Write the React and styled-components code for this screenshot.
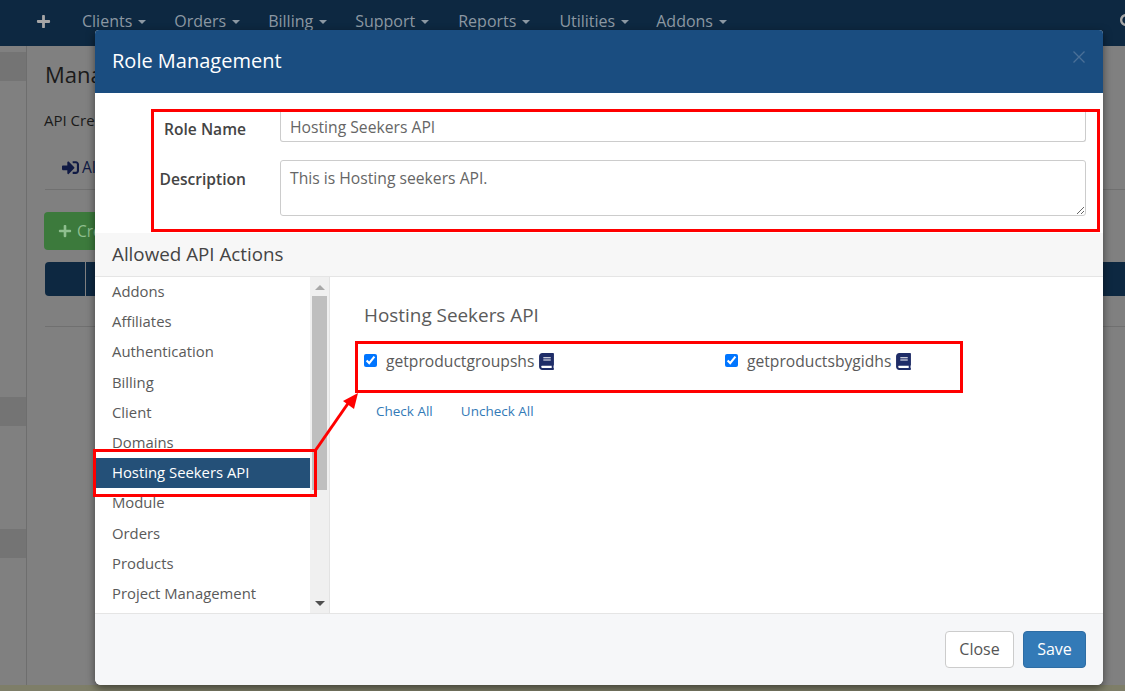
import React from 'react';
import styled, { createGlobalStyle } from 'styled-components';
import { FaBook, FaPlus, FaSearch, FaSignInAlt } from 'react-icons/fa';

const Global = createGlobalStyle`
  html, body { margin: 0; padding: 0; height: 100%; overflow: hidden; background: #808080; }
  * { box-sizing: border-box; }
  body { font-family: "Open Sans", "Liberation Sans", sans-serif; font-size: 14px; color: #333; }
`;

const Page = styled.div`
  position: relative;
  width: 1125px;
  height: 691px;
  overflow: hidden;
  display: flex;
  flex-direction: column;
`;
const TopNav = styled.nav`
  height: 46px;
  flex: none;
  background: #0d2841;
  display: flex;
  align-items: center;
  padding: 0 0 4px 36px;
  color: #8c98a3;
  font-size: 16px;
`;
const PlusItem = styled.span`
  color: #a6a6a6;
  font-size: 15px;
  display: flex;
  margin-right: 31px;
`;
const NavItem = styled.span`
  display: flex;
  align-items: center;
  gap: 6px;
  margin-right: ${p => p.$gap}px;
  white-space: nowrap;
`;
const Caret = styled.i`
  width: 0;
  height: 0;
  margin-top: 2px;
  border-left: 4px solid transparent;
  border-right: 4px solid transparent;
  border-top: 4px solid #8c98a3;
`;
const NavSearch = styled.span`
  margin-left: auto;
  margin-right: -10px;
  display: flex;
  font-size: 15px;
  color: #a6a6a6;
`;
const Behind = styled.div`
  flex: 1;
  display: flex;
  min-height: 0;
`;
const SideBar = styled.aside`
  width: 27px;
  flex: none;
  border-right: 1px solid #6e6e6e;
  padding-top: 6px;
`;
const SideRow = styled.div`
  height: 29px;
  background: #747474;
  margin-bottom: ${p => p.$after}px;
`;
const Main = styled.main`
  flex: 1;
  min-width: 0;
  padding: 14px 0 0 18px;
  color: #1a1a1a;
`;
const PageTitle = styled.h1`
  margin: 0;
  font-size: 22px;
  line-height: 28px;
  font-weight: 400;
`;
const Crumb = styled.p`
  margin: 22px 0 0 -1px;
  line-height: 20px;
  font-size: 15px;
`;
const TabLine = styled.div`
  margin-top: 19px;
  height: 41px;
  padding: 7px 0 0 17px;
  display: flex;
  align-items: flex-start;
  gap: 3px;
  font-size: 15.5px;
  color: #101a44;
  border-bottom: 1px solid #707070;
`;
const TabIcon = styled(FaSignInAlt)`
  font-size: 17px;
  margin-top: 3px;
`;
const GreenButton = styled.div`
  margin-top: 22px;
  margin-left: -1px;
  width: 120px;
  height: 38px;
  background: #3c7a3c;
  border-radius: 4px;
  color: #8fbf8f;
  display: flex;
  align-items: center;
  gap: 5px;
  padding-left: 14px;
  font-size: 15.5px;
`;
const HeadCells = styled.div`
  margin-top: 12px;
  display: flex;
  gap: 1px;
  height: 34px;
`;
const HeadCell = styled.div`
  background: #0d2841;
  width: ${p => p.$w};
  flex: ${p => (p.$grow ? 1 : 'none')};
  border-radius: ${p => (p.$grow ? '0' : '4px 0 0 4px')};
`;
const RowLine = styled.div`
  margin-top: 30px;
  border-top: 1px solid #707070;
`;
const BottomStrip = styled.div`
  height: 6px;
  flex: none;
  background: #7e7e68;
`;

const Modal = styled.section`
  position: absolute;
  left: 95px;
  top: 30px;
  width: 1008px;
  height: 655px;
  background: #fff;
  border-radius: 4px 4px 6px 6px;
  box-shadow: 0 3px 9px rgba(0, 0, 0, .5);
  display: flex;
  flex-direction: column;
  overflow: hidden;
`;
const ModalHeader = styled.header`
  height: 63px;
  flex: none;
  background: #1a4d80;
  display: flex;
  align-items: center;
  justify-content: space-between;
  padding: 0 18px 2px 17px;
`;
const ModalTitle = styled.h2`
  margin: 0;
  color: #fff;
  font-size: 20px;
  font-weight: 500;
  line-height: 26px;
`;
const CloseX = styled.svg`
  width: 12px;
  height: 12px;
  margin-top: -7px;
  stroke: #4a7097;
  stroke-width: 1.3;
  fill: none;
`;
const FormArea = styled.div`
  height: 140px;
  flex: none;
  padding: 17px 17px 0 0;
`;
const FormRow = styled.div`
  display: flex;
  align-items: flex-start;
  margin-bottom: 18px;
`;
const FieldLabel = styled.label`
  width: 185px;
  flex: none;
  text-align: right;
  padding-right: 34px;
  padding-top: ${p => p.$top}px;
  font-weight: 600;
  line-height: 20px;
  font-size: 15.6px;
  color: #444;
`;
const TextInput = styled.input`
  flex: 1;
  height: 32px;
  padding: 2px 9px 0;
  margin: 0;
  border: 1px solid #ccc;
  border-top: 0;
  border-radius: 0 0 3px 3px;
  font: 400 15.7px "Open Sans", sans-serif;
  color: #666;
  outline: none;
`;
const TextBox = styled.textarea`
  flex: 1;
  height: 56px;
  padding: 6px 9px;
  margin: 0;
  border: 1px solid #ccc;
  border-radius: 3px;
  font: 400 15.7px/22px "Open Sans", sans-serif;
  color: #666;
  outline: none;
`;
const SectionHead = styled.div`
  height: 44px;
  flex: none;
  background: #f7f7f7;
  border-bottom: 1px solid #e5e5e5;
  padding: 0 17px 2px;
  display: flex;
  align-items: center;
  font-size: 18.8px;
  color: #444;
`;
const Split = styled.div`
  flex: 1;
  min-height: 0;
  display: flex;
`;
const ListPane = styled.div`
  width: 235px;
  flex: none;
  display: flex;
  border-right: 1px solid #e3e3e3;
`;
const ApiList = styled.ul`
  flex: 1;
  list-style: none;
  margin: 0;
  padding: 0 0 0 1px;
  overflow: hidden;
`;
const ApiItem = styled.li`
  height: 30.2px;
  line-height: 28px;
  padding-left: 16px;
  font-size: 14.85px;
  color: ${p => (p.$active ? '#fff' : '#5a5a5a')};
  background: ${p => (p.$active ? '#245078' : 'transparent')};
  font-weight: ${p => (p.$active ? 500 : 400)};
  white-space: nowrap;
`;
const Track = styled.div`
  width: 19px;
  flex: none;
  background: #f0f0f0;
  display: flex;
  flex-direction: column;
  align-items: center;
`;
const ArrowUp = styled.i`
  flex: none;
  width: 0;
  height: 0;
  margin: 8px 0 6px;
  border-left: 5px solid transparent;
  border-right: 5px solid transparent;
  border-bottom: 5px solid #a8a8a8;
`;
const Thumb = styled.div`
  flex: none;
  width: 15px;
  height: 194px;
  background: #bfbfbf;
`;
const ArrowDown = styled.i`
  flex: none;
  width: 0;
  height: 0;
  margin: auto 0 7px;
  border-left: 5px solid transparent;
  border-right: 5px solid transparent;
  border-top: 5px solid #505050;
`;
const DetailPane = styled.div`
  flex: 1;
  padding: 26px 0 0 34px;
  color: #5a5a5a;
`;
const DetailTitle = styled.h3`
  margin: 0;
  font-size: 18.9px;
  line-height: 24px;
  font-weight: 400;
`;
const ActionGrid = styled.div`
  display: grid;
  grid-template-columns: 361px 300px;
  margin-top: 24px;
  height: 51px;
`;
const Action = styled.label`
  display: flex;
  align-items: flex-start;
  font-size: 15.65px;
  line-height: 20px;
  color: #5a5a5a;
`;
const Check = styled.input`
  width: 13px;
  height: 13px;
  margin: 3px 9px 0 0;
  flex: none;
`;
const BookIcon = styled(FaBook)`
  color: #1f2d68;
  font-size: 17px;
  margin: 2px 0 0 4px;
`;
const LinkRow = styled.div`
  display: flex;
  gap: 28px;
  padding-left: 12px;
  font-size: 13.5px;
  line-height: 18px;
  color: #337ab7;
`;
const Footer = styled.footer`
  height: 72px;
  flex: none;
  background: #f6f7f9;
  border-top: 1px solid #e5e5e5;
  display: flex;
  justify-content: flex-end;
  align-items: flex-start;
  gap: 9px;
  padding: 17px 17px 0 0;
`;
const Btn = styled.button`
  height: 37px;
  width: ${p => p.$w}px;
  border-radius: 4px;
  font: ${p => (p.$primary ? 500 : 400)} 16px "Open Sans", sans-serif;
  padding: 0 0 1px;
  color: ${p => (p.$primary ? '#fff' : '#555')};
  background: ${p => (p.$primary ? '#337ab7' : '#fff')};
  border: 1px solid ${p => (p.$primary ? '#2e6da4' : '#ccc')};
`;
const RedBox = styled.div`
  position: absolute;
  left: ${p => p.$x}px;
  top: ${p => p.$y}px;
  width: ${p => p.$w}px;
  height: ${p => p.$h}px;
  border: 3px solid #f00;
  pointer-events: none;
`;
const ArrowMark = styled.svg`
  position: absolute;
  left: 310px;
  top: 385px;
  width: 60px;
  height: 75px;
  pointer-events: none;
`;

const nav = [['Clients', 28], ['Orders', 28], ['Billing', 28], ['Support', 29], ['Reports', 29], ['Utilities', 27], ['Addons', 0]];
const apis = ['Addons', 'Affiliates', 'Authentication', 'Billing', 'Client', 'Domains', 'Hosting Seekers API', 'Module', 'Orders', 'Products', 'Project Management'];

export default function App() {
  return (
    <Page>
      <Global />
      <TopNav>
        <PlusItem><FaPlus /></PlusItem>
        {nav.map(([n, g]) => <NavItem key={n} $gap={g}>{n}<Caret /></NavItem>)}
        <NavSearch><FaSearch /></NavSearch>
      </TopNav>
      <Behind>
        <SideBar>
          <SideRow $after={316} />
          <SideRow $after={103} />
          <SideRow $after={0} />
        </SideBar>
        <Main>
          <PageTitle>Mana</PageTitle>
          <Crumb>API Cre</Crumb>
          <TabLine><TabIcon />AI</TabLine>
          <GreenButton><FaPlus size={14} />Cre</GreenButton>
          <HeadCells>
            <HeadCell $w="40px" />
            <HeadCell $grow />
          </HeadCells>
          <RowLine />
        </Main>
      </Behind>
      <BottomStrip />

      <Modal>
        <ModalHeader>
          <ModalTitle>Role Management</ModalTitle>
          <CloseX viewBox="0 0 12 12"><path d="M.5.5l11 11M11.5.5l-11 11" /></CloseX>
        </ModalHeader>
        <FormArea>
          <FormRow>
            <FieldLabel $top={9}>Role Name</FieldLabel>
            <TextInput readOnly defaultValue="Hosting Seekers API" />
          </FormRow>
          <FormRow>
            <FieldLabel $top={9}>Description</FieldLabel>
            <TextBox readOnly defaultValue="This is Hosting seekers API." />
          </FormRow>
        </FormArea>
        <SectionHead>Allowed API Actions</SectionHead>
        <Split>
          <ListPane>
            <ApiList>
              {apis.map(a => <ApiItem key={a} $active={a === 'Hosting Seekers API'}>{a}</ApiItem>)}
            </ApiList>
            <Track>
              <ArrowUp />
              <Thumb />
              <ArrowDown />
            </Track>
          </ListPane>
          <DetailPane>
            <DetailTitle>Hosting Seekers API</DetailTitle>
            <ActionGrid>
              <Action><Check type="checkbox" defaultChecked />getproductgroupshs<BookIcon /></Action>
              <Action><Check type="checkbox" defaultChecked />getproductsbygidhs<BookIcon /></Action>
            </ActionGrid>
            <LinkRow><span>Check All</span><span>Uncheck All</span></LinkRow>
          </DetailPane>
        </Split>
        <Footer>
          <Btn $w={69}>Close</Btn>
          <Btn $w={63} $primary>Save</Btn>
        </Footer>
      </Modal>

      <RedBox $x={151} $y={109} $w={949} $h={123} />
      <RedBox $x={93} $y={449} $w={224} $h={48} />
      <RedBox $x={355} $y={341} $w={608} $h={52} />
      <ArrowMark viewBox="0 0 60 75">
        <path d="M5 66 L39 17" stroke="#f00" strokeWidth="3" fill="none" />
        <path d="M48 8 L44 24 L33 16 Z" fill="#f00" />
      </ArrowMark>
    </Page>
  );
}
